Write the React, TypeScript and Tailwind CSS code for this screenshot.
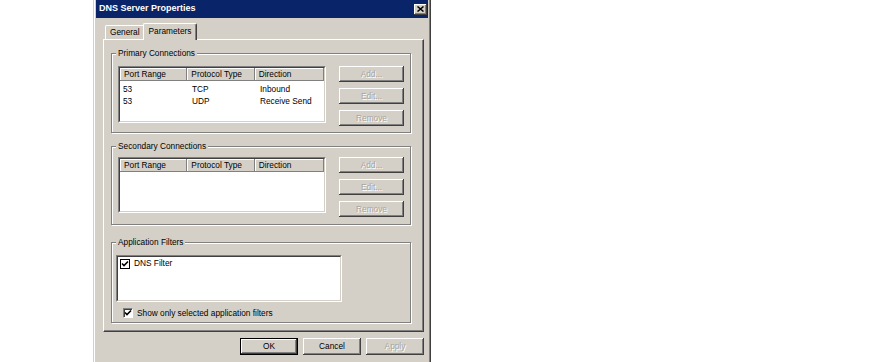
import React from 'react';

const raised =
  'shadow-[inset_-1px_-1px_0_#404040,inset_1px_1px_0_#ffffff,inset_-2px_-2px_0_#808080]';

const Button = ({ label, disabled = false, isDefault = false, w, h }: { label: string; disabled?: boolean; isDefault?: boolean; w: string; h: string }) => (
  <div
    className={`${w} ${h} bg-[#d4d0c8] flex items-center justify-center ${
      isDefault ? 'border border-black' : ''
    }`}
  >
    <div className={`w-full h-full flex items-center justify-center ${raised}`}>
      <span
        className={
          disabled
            ? 'text-[#a8a59e] [text-shadow:1px_1px_0_#ffffff]'
            : 'text-black'
        }
      >
        {label}
      </span>
    </div>
  </div>
);

const Sunken = ({ className, children }: { className: string; children?: React.ReactNode }) => (
  <div className={`${className} border-t border-l border-t-[#808080] border-l-[#808080] border-b border-r border-b-white border-r-white`}>
    <div className="w-full h-full bg-white border-t border-l border-t-[#404040] border-l-[#404040] border-b border-r border-b-[#d4d0c8] border-r-[#d4d0c8] overflow-hidden">
      {children}
    </div>
  </div>
);

const Check = ({ dark = false }: { dark?: boolean }) => (
  <div
    className={`w-[10px] h-[10px] bg-white flex items-center justify-center shrink-0 ${
      dark
        ? 'border border-black'
        : 'border-t border-l border-t-[#808080] border-l-[#808080] border-b border-r border-b-white border-r-white shadow-[inset_1px_1px_0_#404040]'
    }`}
  >
    <svg width="8" height="8" viewBox="0 0 8 8">
      <path d="M1 3.5 L3 5.5 L7 1.5" fill="none" stroke="#000" strokeWidth="1.6" />
    </svg>
  </div>
);

const Group = ({ title, className, children }: { title: string; className: string; children: React.ReactNode }) => (
  <div className={`relative w-[300px] border border-[#808080] shadow-[inset_1px_1px_0_#ffffff,1px_1px_0_#ffffff] ${className}`}>
    <span className="absolute -top-[6px] left-[4px] px-[2px] bg-[#d4d0c8] leading-[10px]">
      {title}
    </span>
    {children}
  </div>
);

const Header = () => (
  <div className="flex h-[13px] bg-[#d4d0c8]">
    {['Port Range', 'Protocol Type', 'Direction'].map((c, i) => (
      <div
        key={c}
        className={`${i === 2 ? 'w-[70px]' : 'w-[68px]'} h-full pl-[4px] flex items-center shadow-[inset_-1px_-1px_0_#808080,inset_1px_1px_0_#ffffff]`}
      >
        {c}
      </div>
    ))}
  </div>
);

const SideButtons = () => (
  <div className="flex flex-col gap-[6px] ml-[13px]">
    <Button label="Add..." disabled w="w-[65px]" h="h-[16px]" />
    <Button label="Edit..." disabled w="w-[65px]" h="h-[16px]" />
    <Button label="Remove" disabled w="w-[65px]" h="h-[16px]" />
  </div>
);

const rows = [
  { port: '53', proto: 'TCP', dir: 'Inbound' },
  { port: '53', proto: 'UDP', dir: 'Receive Send' },
];

export default function App() {
  return (
    <div className="w-[893px] h-[362px] bg-white overflow-hidden font-['Liberation_Sans',Arial,sans-serif] text-[8.3px] text-black">
      <div className="ml-[93px] w-[338px] h-[362px] bg-[#d4d0c8] px-[3px] shadow-[inset_-1px_0_0_#404040,inset_1px_0_0_#d4d0c8,inset_2px_0_0_#ffffff,inset_-2px_0_0_#808080]">
        {/* title bar */}
        <div className="h-[18px] bg-[#0a246a] flex items-center justify-between pl-[3px] pr-[1px]">
          <span className="text-white font-bold text-[9px]">DNS Server Properties</span>
          <div className={`w-[13px] h-[11px] bg-[#d4d0c8] flex items-center justify-center ${raised}`}>
            <svg width="7" height="6" viewBox="0 0 7 6">
              <path d="M0.5 0.5 L6.5 5.5 M6.5 0.5 L0.5 5.5" stroke="#000" strokeWidth="1.5" />
            </svg>
          </div>
        </div>

        <div className="pl-[7px] pr-[4px]">
          {/* tabs */}
          <div className="flex items-end h-[21px] pt-[4px] pl-[2px]">
            <div className="h-[14px] px-[4px] flex items-center border-t border-l border-white shadow-[inset_-1px_0_0_#808080] rounded-tl-[2px]">
              General
            </div>
            <div className="relative z-10 h-[17px] -mb-px -ml-[1px] px-[5px] pb-[2px] flex items-center bg-[#d4d0c8] border-t border-l border-white border-r border-r-[#404040] shadow-[inset_-1px_0_0_#808080] rounded-t-[2px]">
              Parameters
            </div>
          </div>

          {/* panel */}
          <div className="h-[293px] border-t border-l border-white border-r border-b border-r-[#404040] border-b-[#404040] shadow-[inset_-1px_-1px_0_#808080] pl-[7px] pt-[13px] flex flex-col">
            <Group title="Primary Connections" className="h-[80px] pt-[12px] pl-[6px]">
              <div className="flex">
                <Sunken className="w-[208px] h-[57px]">
                  <Header />
                  <div className="pt-[2px]">
                    {rows.map((r, i) => (
                      <div key={i} className="flex h-[12px] items-center">
                        <div className="w-[68px] pl-[3px]">{r.port}</div>
                        <div className="w-[68px] pl-[4px]">{r.proto}</div>
                        <div className="pl-[4px]">{r.dir}</div>
                      </div>
                    ))}
                  </div>
                </Sunken>
                <SideButtons />
              </div>
            </Group>

            <Group title="Secondary Connections" className="h-[79px] mt-[13px] pt-[10px] pl-[6px]">
              <div className="flex">
                <Sunken className="w-[208px] h-[56px]">
                  <Header />
                </Sunken>
                <SideButtons />
              </div>
            </Group>

            <Group title="Application Filters" className="h-[81px] mt-[17px] pt-[12px] pl-[4px]">
              <Sunken className="w-[226px] h-[47px]">
                <div className="flex items-center gap-[4px] pl-[2px] pt-[1px] h-[12px]">
                  <Check dark />
                  <span>DNS Filter</span>
                </div>
              </Sunken>
              <div className="flex items-center gap-[4px] mt-[6px] pl-[7px] h-[10px]">
                <Check />
                <span>Show only selected application filters</span>
              </div>
            </Group>
          </div>

          {/* footer */}
          <div className="flex justify-end gap-[5px] mt-[6px]">
            <Button label="OK" isDefault w="w-[58px]" h="h-[17px]" />
            <Button label="Cancel" w="w-[58px]" h="h-[17px]" />
            <Button label="Apply" disabled w="w-[58px]" h="h-[17px]" />
          </div>
        </div>
      </div>
    </div>
  );
}
